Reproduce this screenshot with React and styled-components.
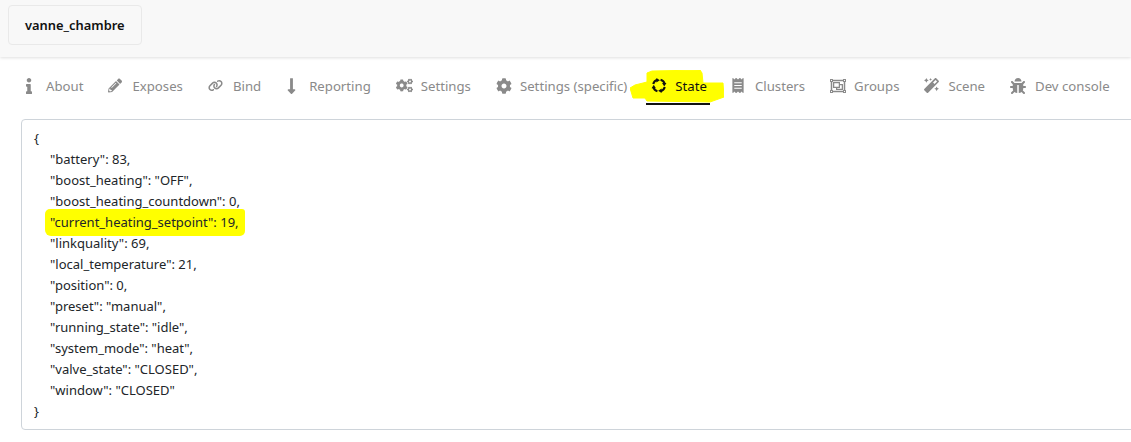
import React from 'react'
import styled, { createGlobalStyle } from 'styled-components'
import {
	FaInfo, FaPencilAlt, FaLongArrowAltDown, FaCogs, FaCog,
	FaReceipt, FaRegObjectGroup, FaMagic, FaBug,
} from 'react-icons/fa'
import { FaLink } from 'react-icons/fa6'

const GlobalStyle = createGlobalStyle`
	html, body {
		margin: 0;
		padding: 0;
		background: #fff;
		overflow: hidden;
	}
	body {
		font-family: "Noto Sans", "Open Sans", sans-serif;
		font-size: 14px;
		color: #212529;
	}
`

// Four arcs chasing each other, the icon of the State tab
const StateIcon = () => (
	<svg viewBox="0 0 16 16" fill="none">
		<g stroke="currentColor" strokeWidth="2.4">
			<path d="M1.4 6.2A7 7 0 0 1 6.2 1.4" />
			<path d="M9.8 1.4A7 7 0 0 1 14.6 6.2" />
			<path d="M14.6 9.8A7 7 0 0 1 9.8 14.6" />
			<path d="M6.2 14.6A7 7 0 0 1 1.4 9.8" />
		</g>
		<g fill="currentColor">
			<path d="M5 -0.5L9 2L5 4.5Z" />
			<path d="M16.5 5L14 9L11.5 5Z" />
			<path d="M11 16.5L7 14L11 11.5Z" />
			<path d="M-0.5 11L2 7L4.5 11Z" />
		</g>
	</svg>
)

const tabs = [
	{ label: 'About', icon: FaInfo, width: 6, height: 16, gap: 14 },
	{ label: 'Exposes', icon: FaPencilAlt, width: 14, height: 15, gap: 10 },
	{ label: 'Bind', icon: FaLink, width: 15, height: 13, gap: 10 },
	{ label: 'Reporting', icon: FaLongArrowAltDown, width: 11, height: 18, gap: 12 },
	{ label: 'Settings', icon: FaCogs, width: 17, height: 15, gap: 8 },
	{ label: 'Settings (specific)', icon: FaCog, width: 16, height: 16, gap: 8 },
	{ label: 'State', icon: StateIcon, width: 14, height: 15, gap: 9, active: true },
	{ label: 'Clusters', icon: FaReceipt, width: 12, height: 15, gap: 11 },
	{ label: 'Groups', icon: FaRegObjectGroup, width: 16, height: 16, gap: 8 },
	{ label: 'Scene', icon: FaMagic, width: 15, height: 15, gap: 9 },
	{ label: 'Dev console', icon: FaBug, width: 16, height: 16, gap: 9 },
]

const lines = [
	'"battery": 83,',
	'"boost_heating": "OFF",',
	'"boost_heating_countdown": 0,',
	'"current_heating_setpoint": 19,',
	'"linkquality": 69,',
	'"local_temperature": 21,',
	'"position": 0,',
	'"preset": "manual",',
	'"running_state": "idle",',
	'"system_mode": "heat",',
	'"valve_state": "CLOSED",',
	'"window": "CLOSED"',
]

const App = () => {
	return (
		<Page>
			<GlobalStyle />
			<Header>
				<DeviceName>vanne_chambre</DeviceName>
			</Header>
			<TabBar>
				{tabs.map(tab => (
					<Tab key={tab.label} $active={tab.active} $gap={tab.gap}>
						{tab.active && (
							<Scribble viewBox="0 0 94 33">
								<polygon points="0,18 5,15 17,12 17,3 22,1 70,0 72,3 73,13 93,13 94,27 80,32 17,31 15,28 3,28" />
							</Scribble>
						)}
						<IconSlot $width={tab.width} $height={tab.height}>
							<tab.icon />
						</IconSlot>
						<span>{tab.label}</span>
					</Tab>
				))}
			</TabBar>
			<StateBox>
				<Line>{'{'}</Line>
				{lines.map(line => (
					<Line key={line} $indent $marked={line.startsWith('"current')}>{line}</Line>
				))}
				<Line>{'}'}</Line>
			</StateBox>
		</Page>
	)
}

const Page = styled.div`
	width: 1131px;
	height: 442px;
	overflow: hidden;
`

const Header = styled.header`
	height: 57px;
	box-sizing: border-box;
	padding: 5px 8px;
	background: #f8f8f8;
	box-shadow: 0 1px 3px rgba(0, 0, 0, 0.13);
`

const DeviceName = styled.div`
	display: inline-flex;
	align-items: center;
	height: 40px;
	box-sizing: border-box;
	padding: 0 16px;
	background: #f8f8f8;
	border: 1px solid #e9e9e9;
	border-radius: 4px;
	font-weight: 600;
	font-size: 12.9px;
	color: #111;
`

const TabBar = styled.nav`
	display: flex;
	gap: 16px;
	height: 48px;
	padding-left: 20px;
	margin-bottom: 14px;
	white-space: nowrap;
`

const Tab = styled.div`
	position: relative;
	display: flex;
	align-items: center;
	gap: ${p => p.$gap}px;
	height: 48px;
	box-sizing: border-box;
	padding: 11px 3px 0 6px;
	font-size: 13.2px;
	color: ${p => (p.$active ? '#111' : '#8a8a8a')};
	border-bottom: 2px solid ${p => (p.$active ? '#111' : 'transparent')};

	span {
		position: relative;
	}
`

const IconSlot = styled.div`
	position: relative;
	display: flex;
	flex-shrink: 0;
	width: ${p => p.$width}px;
	height: ${p => p.$height}px;

	svg {
		width: 100%;
		height: 100%;
		overflow: visible;
	}
`

const Scribble = styled.svg`
	position: absolute;
	left: -16px;
	top: 13px;
	width: 94px;
	height: 33px;
	fill: #ffff00;
	stroke: #ffff00;
	stroke-width: 1;
	stroke-linejoin: round;
`

const StateBox = styled.div`
	isolation: isolate;
	margin-left: 21px;
	width: 1120px;
	height: 311px;
	box-sizing: border-box;
	padding: 8px 12px;
	border: 1px solid #ced4da;
	border-radius: 4px;
	font-size: 13px;
	line-height: 21px;
	color: #212529;
`

const Line = styled.div`
	position: relative;
	width: fit-content;
	padding-left: ${p => (p.$indent ? '16px' : '0')};

	${p => p.$marked && `
		&::before {
			content: '';
			position: absolute;
			z-index: -1;
			left: 11px;
			right: -6px;
			top: -3px;
			bottom: -3px;
			background: #ffff00;
			border-radius: 5px 3px 5px 6px;
		}
	`}
`

export default App
